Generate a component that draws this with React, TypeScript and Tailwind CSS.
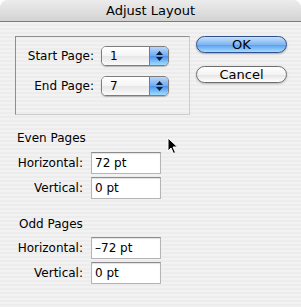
import React from 'react';

const font = "font-['Lucida_Grande','DejaVu_Sans',sans-serif]";

const Popup: React.FC<{ value: string }> = ({ value }) => (
  <div className="flex h-[20px] w-[68px] rounded-[5px] border border-[#7d7d7d] overflow-hidden shadow-[0_1px_1px_rgba(0,0,0,0.25)]">
    <div className="flex-1 flex items-center pl-[8px] text-[12px] text-black bg-[linear-gradient(to_bottom,#ffffff,#f4f4f4_50%,#e6e6e6_51%,#fafafa)]">
      {value}
    </div>
    <div className="w-[19px] flex flex-col items-center justify-center gap-[2px] border-l border-[#5d7fb5] bg-[linear-gradient(to_bottom,#b9d7fb,#6ea9ef_50%,#4b93ea_51%,#9fdcff)]">
      <svg width="7" height="4" viewBox="0 0 7 4"><path d="M3.5 0L7 4H0z" fill="#0f1a2a" /></svg>
      <svg width="7" height="4" viewBox="0 0 7 4"><path d="M0 0h7L3.5 4z" fill="#0f1a2a" /></svg>
    </div>
  </div>
);

const Field: React.FC<{ label: string; value: string }> = ({ label, value }) => (
  <div className="flex items-center">
    <span className="w-[84px] pr-[1px] text-right text-[12px] text-black">{label}</span>
    <div className="ml-[7px] h-[22px] w-[70px] bg-white border border-[#b4b4b4] border-t-[#8c8c8c] shadow-[inset_0_1px_1px_rgba(0,0,0,0.12)] flex items-center pl-[3px] text-[12px] text-black">
      {value}
    </div>
  </div>
);

const App: React.FC = () => {
  return (
    <div className={`relative w-[301px] h-[307px] overflow-hidden rounded-t-[8px] ${font} bg-[repeating-linear-gradient(to_bottom,#ececec_0px,#ececec_2px,#f2f2f2_2px,#f2f2f2_4px)]`}>
      {/* Title bar */}
      <div className="h-[22px] flex items-center justify-center border-b border-[#7a7a7a] bg-[linear-gradient(to_bottom,#ececec,#d3d3d3)] text-[13px] text-black">
        Adjust Layout
      </div>

      <div className="flex pt-[14px] pl-[15px]">
        {/* Page range box */}
        <div className="w-[175px] h-[79px] border border-[#8e8e8e] border-r-[#cdcdcd] border-b-[#cdcdcd] flex flex-col gap-[10px] pt-[9px]">
          <div className="flex items-center">
            <span className="w-[78px] text-right text-[12px] text-black">Start Page:</span>
            <div className="ml-[7px]"><Popup value="1" /></div>
          </div>
          <div className="flex items-center">
            <span className="w-[78px] text-right text-[12px] text-black">End Page:</span>
            <div className="ml-[7px]"><Popup value="7" /></div>
          </div>
        </div>

        {/* Buttons */}
        <div className="ml-[6px] flex flex-col gap-[13px]">
          <button className="h-[17px] w-[91px] rounded-full border border-[#2f4f8f] bg-[linear-gradient(to_bottom,#c6e0fb,#7eb6f2_50%,#559cec_51%,#a8dcff)] text-[13px] leading-none text-black shadow-[0_1px_2px_rgba(0,0,0,0.3)]">
            OK
          </button>
          <button className="h-[17px] w-[91px] rounded-full border border-[#6e6e6e] bg-[linear-gradient(to_bottom,#ffffff,#f3f3f3_50%,#e4e4e4_51%,#ffffff)] text-[13px] leading-none text-black shadow-[0_1px_2px_rgba(0,0,0,0.25)]">
            Cancel
          </button>
        </div>
      </div>

      {/* Even pages */}
      <div className="mt-[14px] flex flex-col">
        <span className="pl-[17px] text-[12px] text-black h-[16px]">Even Pages</span>
        <div className="mt-[7px] flex flex-col gap-[3px]">
          <Field label="Horizontal:" value="72 pt" />
          <Field label="Vertical:" value="0 pt" />
        </div>
      </div>

      {/* Odd pages */}
      <div className="mt-[16px] flex flex-col">
        <span className="pl-[19px] text-[12px] text-black h-[16px]">Odd Pages</span>
        <div className="mt-[6px] flex flex-col gap-[3px]">
          <Field label="Horizontal:" value="–72 pt" />
          <Field label="Vertical:" value="0 pt" />
        </div>
      </div>

      {/* Mouse pointer */}
      <svg className="absolute left-[167px] top-[137px]" width="12" height="18" viewBox="0 0 12 18">
        <path d="M1 1v13l3-3 2.5 5.5 2-1L6 10h4.5z" fill="#000" stroke="#fff" strokeWidth="1" />
      </svg>
    </div>
  );
};

export default App;
